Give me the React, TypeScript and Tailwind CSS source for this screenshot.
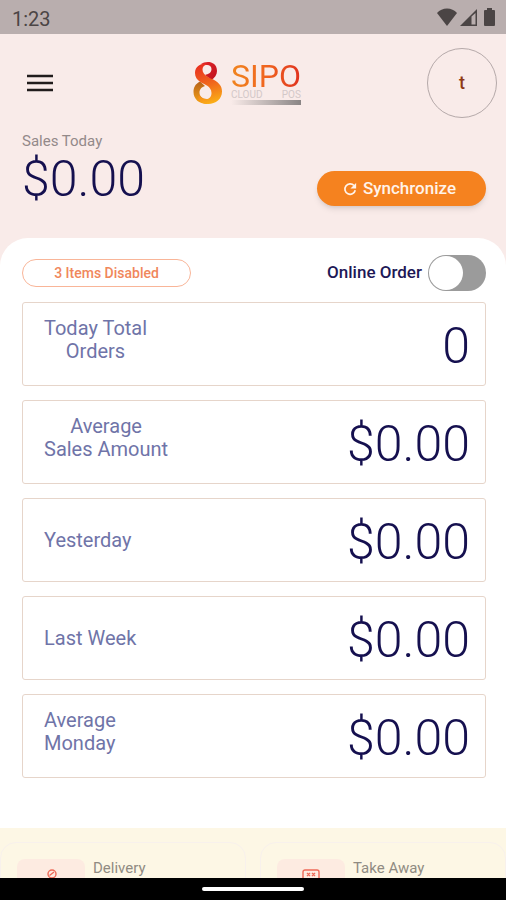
import { useState } from 'react';

interface Stat {
  lines: string[];
  value: string;
  align?: 'left' | 'center';
}

const STATS: Stat[] = [
  { lines: ['Today Total', 'Orders'], value: '0', align: 'center' },
  { lines: ['Average', 'Sales Amount'], value: '$0.00', align: 'center' },
  { lines: ['Yesterday'], value: '$0.00' },
  { lines: ['Last Week'], value: '$0.00' },
  { lines: ['Average', 'Monday'], value: '$0.00' },
];

function StatusBar() {
  return (
    <div className="flex h-[34px] shrink-0 items-center justify-between bg-[#b9aeae] pr-[6px] pl-3 text-[#4b4545]">
      <span className="pt-1 text-xl leading-6">1:23</span>
      <div className="flex items-center">
        <svg width="22" height="20" viewBox="0 0 22 20" fill="currentColor">
          <path d="M11 19 L1 6 Q5 1.5 11 1.5 Q17 1.5 21 6 Z" />
        </svg>
        <svg width="22" height="20" viewBox="0 0 22 20" fill="currentColor">
          <path fillRule="evenodd" d="M2 19 L19 2 V19 Z M13.5 9.5 V17.5 H17.5 V6 Z" />
        </svg>
        <svg width="20" height="20" viewBox="0 0 20 20" fill="currentColor">
          <path d="M7 1 h5 v2 h2 q1 0 1 1 v14 q0 1-1 1 h-9 q-1 0-1-1 V4 q0-1 1-1 h2 z" />
        </svg>
      </div>
    </div>
  );
}

function Logo() {
  return (
    <div className="flex items-center gap-2">
      <svg width="30" height="44" viewBox="0 0 30 44" fill="none">
        <defs>
          <linearGradient id="flameTop" x1="8" y1="2" x2="23" y2="14" gradientUnits="userSpaceOnUse">
            <stop stopColor="#e3262a" />
            <stop offset="1" stopColor="#c4141f" />
          </linearGradient>
          <linearGradient id="flameBody" x1="7" y1="4" x2="18" y2="43" gradientUnits="userSpaceOnUse">
            <stop stopColor="#e92f20" />
            <stop offset="0.5" stopColor="#f0661d" />
            <stop offset="1" stopColor="#fbb016" />
          </linearGradient>
          <linearGradient id="flameLeft" x1="8" y1="20" x2="8" y2="42" gradientUnits="userSpaceOnUse">
            <stop stopColor="#b4601a" />
            <stop offset="1" stopColor="#f5a016" />
          </linearGradient>
        </defs>
        {/* right side of the upper loop */}
        <path
          fill="url(#flameTop)"
          d="M8 3 C13 -0.5 24 0 24 10 C24 14 21.5 17 18.5 19 L12 14 C15 13 18.5 12 18.5 8 C18.5 4.500 15.500 3.500 13 4 Z"
        />
        {/* left side of the lower loop */}
        <path
          fill="url(#flameLeft)"
          d="M7 20.500 C2 23 0.5 27 0.5 31 C0.5 38 6 43 14 43 L14 38 C9 38 6.500 35 6.500 31.500 C6.500 28 9 26 12 25 Z"
        />
        {/* ribbon crossing from top left to bottom right */}
        <path
          fill="url(#flameBody)"
          d="M14 3.500 C11 1.500 2 4 2 12 C2 16 4 19 7.500 21 C11 23.500 18.500 25 18.500 32 C18.500 36 16 38.500 12 38 C9 37.500 7 36 6 34 C4 37 7 43 15 43 C23 43 29 38 29 30.500 C29 25 26 22 22 19.500 C18 17 9.500 15 9.500 8.500 C9.500 6 11 4 14 3.500 Z"
        />
      </svg>
      <div className="flex flex-col">
        <span className="bg-linear-to-r from-[#f0851f] via-[#f0641f] to-[#e0301f] bg-clip-text text-[32px] leading-7 font-normal text-transparent">
          SIPO
        </span>
        <span className="flex justify-between text-[10px] leading-[10px] text-[#d3c8c8]">
          <span>CLOUD</span>
          <span>POS</span>
        </span>
        <span className="h-[5px] bg-linear-to-r from-transparent to-[#8a8585]" />
      </div>
    </div>
  );
}

function StatCard({ lines, value, align = 'left' }: Stat) {
  return (
    <div className="flex h-[84px] items-center justify-between rounded-[3px] border border-[#e6d5ca] pr-[15px] pl-[21px]">
      <div
        className={`text-xl leading-[23px] text-[#6f74a8] ${lines.length > 1 ? 'pb-2' : ''} ${
          align === 'center' ? 'text-center' : 'text-left'
        }`}
      >
        {lines.map((line) => (
          <div key={line}>{line}</div>
        ))}
      </div>
      <div className="pt-[3px] text-[50px] leading-[60px] font-light text-[#15104f]">{value}</div>
    </div>
  );
}

function DeliveryIcon() {
  return (
    <svg width="14" height="18" viewBox="0 0 14 18" fill="none" stroke="#ee6a58" strokeWidth="1.4">
      <circle cx="8" cy="5" r="4" />
      <path d="M5.5 6.5 L10 3 M6 9 L4 13 H12 L10 9 M8 9 V13" />
    </svg>
  );
}

function TakeAwayIcon() {
  return (
    <svg width="18" height="18" viewBox="0 0 18 18" fill="none" stroke="#ee6a58" strokeWidth="1.4">
      <rect x="1" y="1" width="16" height="12" rx="2" />
      <path d="M5 4 L8 7 M8 4 L5 7 M10 4 L13 7 M13 4 L10 7" />
    </svg>
  );
}

function ChannelCard({ label, icon }: { label: string; icon: React.ReactNode }) {
  return (
    <div className="flex h-24 items-start gap-2 rounded-2xl border border-[#f8f1ec] px-4 pt-4">
      <div className="flex h-14 w-[68px] shrink-0 justify-center rounded-lg bg-[#fdebe1] pt-[10px]">{icon}</div>
      <span className="text-[15px] leading-[18px] text-[#908b82]">{label}</span>
    </div>
  );
}

export default function App() {
  const [online, setOnline] = useState(false);

  return (
    <div className="flex h-screen flex-col overflow-hidden bg-[#f9ebe9] font-['Roboto',sans-serif]">
      <StatusBar />

      <main className="min-h-0 flex-1 overflow-hidden">
        <header className="flex items-center justify-between pt-[14px] pr-[9px] pl-[27px]">
          <button aria-label="Menu" className="flex size-10 items-center">
            <svg width="26" height="20" viewBox="0 0 26 20" stroke="#211c1c" strokeWidth="2.6">
              <path d="M0 3 H26 M0 10 H26 M0 17 H26" />
            </svg>
          </button>
          <Logo />
          <button className="flex size-[70px] items-center justify-center rounded-full border border-[#b5a9a9] text-lg font-medium text-[#8f3a16]">
            t
          </button>
        </header>

        <section className="flex items-end justify-between pt-[14px] pr-5 pb-8 pl-[22px]">
          <div>
            <div className="text-[15px] leading-[18px] text-[#938989]">Sales Today</div>
            <div className="pt-[3px] text-[50px] leading-[53px] font-light text-[#15104f]">$0.00</div>
          </div>
          <button className="flex h-[35px] w-[169px] items-center justify-center gap-[6px] rounded-full bg-[#f5821f] pr-1 text-[17px] font-medium text-[#fff3ea] shadow-md">
            <svg width="14" height="14" viewBox="0 0 16 16" fill="none" stroke="currentColor" strokeWidth="2">
              <path d="M12.6 4 A6 6 0 1 0 14 9.5" />
              <path d="M15 1 V7.500 H8.500 Z" fill="currentColor" stroke="none" />
            </svg>
            Synchronize
          </button>
        </section>

        <section className="rounded-t-[28px] bg-white pt-[17px] pr-5 pb-[50px] pl-[22px]">
          <div className="flex items-center justify-between">
            <button className="h-7 w-[169px] rounded-full border border-[#f9b598] text-sm font-medium text-[#f0875c]">
              3 Items Disabled
            </button>
            <label className="flex items-center gap-[6px] text-[17px] font-medium text-[#1d1856]">
              Online Order
              <input
                type="checkbox"
                role="switch"
                checked={online}
                onChange={(e) => setOnline(e.target.checked)}
                className="h-9 w-[58px] appearance-none rounded-full bg-[#9b9b9b] p-px before:block before:size-[34px] before:rounded-full before:bg-white checked:bg-[#f5821f] checked:before:ml-auto"
              />
            </label>
          </div>

          <div className="mt-[11px] flex flex-col gap-[14px]">
            {STATS.map((stat) => (
              <StatCard key={stat.lines.join(' ')} {...stat} />
            ))}
          </div>
        </section>

        <section className="grid grid-cols-2 gap-[14px] bg-[#fdf7e5] pt-[14px] pb-4">
          <ChannelCard label="Delivery" icon={<DeliveryIcon />} />
          <ChannelCard label="Take Away" icon={<TakeAwayIcon />} />
        </section>
      </main>

      <div className="flex h-[22px] shrink-0 items-center justify-center bg-black">
        <div className="h-1 w-[102px] rounded-full bg-white" />
      </div>
    </div>
  );
}
